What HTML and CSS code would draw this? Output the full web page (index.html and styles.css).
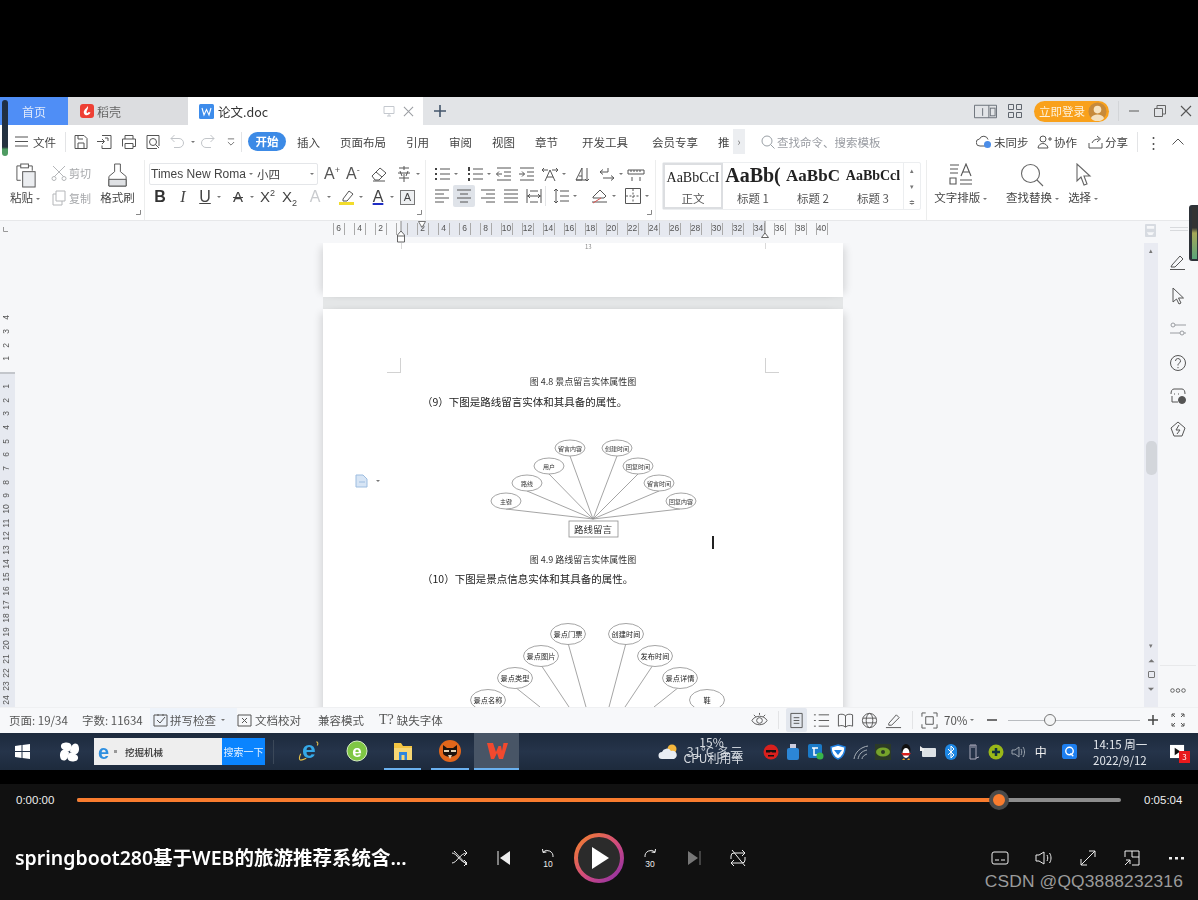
FILE: index.html
```html
<!DOCTYPE html>
<html lang="zh">
<head>
<meta charset="utf-8">
<title>论文.doc</title>
<link rel="stylesheet" href="styles.css">
</head>
<body>
<div class="topgap"></div>
<main class="screen">
  <div class="tabs">
    <div class="tab home">首页</div>
    <div class="tab shell">
      <svg class="tab-ic" viewBox="0 0 14 14"><rect width="14" height="14" rx="3" fill="#ee4035"/><path d="M8 2C6 5 3 6 4 9.500C5 12 9 12 10.500 8.500L8.500 8C8 9.500 6.500 9.500 6.500 8C6.500 6.500 8.500 5 8 2Z" fill="#fff"/></svg>
      <span>稻壳</span>
    </div>
    <div class="tab doc">
      <svg class="tab-ic-w" viewBox="0 0 15 15"><rect width="15" height="15" rx="1.500" fill="#3d8ceb"/><path d="M3 4l2 7 2.500-5.500L10 11l2-7" fill="none" stroke="#fff" stroke-width="1.100"/></svg>
      <span class="doc-name">论文.doc</span>
      <svg class="doc-mon" viewBox="0 0 12 12"><path d="M1 1.500h10v7H1zM6 8.500v2.500M4 11h4" fill="none" stroke="#c4c8ce"/></svg>
      <svg class="doc-x" viewBox="0 0 12 12"><path d="M1 1l10 10M11 1L1 11" stroke="#9a9da2" stroke-width="1.100"/></svg>
    </div>
    <svg class="tab-plus" viewBox="0 0 12 12"><path d="M6 0v12M0 6h12" stroke="#44566c" stroke-width="1.600"/></svg>
    <div class="tab-right">
      <svg class="tr-tablet" viewBox="0 0 24 15"><path d="M.5 1h23v13H.5zM15.500 1v13" fill="none" stroke="#6a7078"/><path d="M9 4v8" stroke="#6a7078"/><rect x="17" y="4" width="5" height="8" fill="none" stroke="#6a7078"/></svg>
      <svg class="tr-grid" viewBox="0 0 14 14"><path d="M.5.500h5v5h-5zM8.500.500h5v5h-5zM.5 8.500h5v5h-5zM8.500 8.500h5v5h-5z" fill="none" stroke="#5f656d"/></svg>
      <div class="login"><span>立即登录</span><svg class="avatar" viewBox="0 0 20 20"><circle cx="10" cy="10" r="9.500" fill="#c78a3a"/><circle cx="10" cy="8" r="4" fill="#f7e3bf"/><path d="M3 17c2-5 12-5 14 0a9 9 0 0 1-14 0z" fill="#f4e0bd"/></svg></div>
      <i class="vsep tab-sep"></i>
      <svg class="win-ic" viewBox="0 0 12 12"><path d="M1 6h10" stroke="#666" stroke-width="1.100"/></svg>
      <svg class="win-ic" viewBox="0 0 12 12"><path d="M.5 3.500h8v8h-8zM3 3.500V.5h8.500V9H8.500" fill="none" stroke="#666"/></svg>
      <svg class="win-ic" viewBox="0 0 12 12"><path d="M1 1l10 10M11 1L1 11" stroke="#555" stroke-width="1.100"/></svg>
    </div>
  </div>

  <div class="menu">
    <svg class="m-burger" viewBox="0 0 13 11"><path d="M0 1h13M0 5.500h13M0 10h13" stroke="#555" stroke-width="1.200"/></svg>
    <span class="m-file">文件</span>
    <i class="vsep m-sep1"></i>
    <div class="m-tools">
      <svg class="i" viewBox="0 0 18 18"><path d="M3 2.500h9l3 3v10H3zM6 15.500V10h6v5.500M6 2.500V6h5" /></svg>
      <svg class="i" viewBox="0 0 18 18"><path d="M6 2.500h9v13H6v-3M1 8.500h7M6 6l2.500 2.500L6 11M9 5h3v3" /></svg>
      <svg class="i" viewBox="0 0 18 18"><path d="M5 6V2.500h8V6M2.500 13.500V6h13v7.500H13M5 10.500h8v5H5z" /></svg>
      <svg class="i" viewBox="0 0 18 18"><path d="M13 15.500H3v-13h12V13" /><circle cx="9" cy="9" r="3.500"/><path d="M11.500 11.500l3.500 3.500"/></svg>
      <svg class="i dim" viewBox="0 0 18 18"><path d="M3 5.500h8a4.500 4.500 0 0 1 0 9H6M3 5.500L6.500 2M3 5.500L6.500 9"/></svg>
      <i class="caret c-undo"></i>
      <svg class="i dim" viewBox="0 0 18 18"><path d="M15 5.500H7a4.500 4.500 0 0 0 0 9h5M15 5.500L11.500 2M15 5.500L11.500 9"/></svg>
      <svg class="i chev" viewBox="0 0 18 18"><path d="M5 5h8M5 9l4 4 4-4"/></svg>
    </div>
    <i class="vsep m-sep2"></i>
    <span class="pill">开始</span>
    <nav class="m-nav">
      <span>插入</span><span>页面布局</span><span>引用</span><span>审阅</span><span>视图</span><span>章节</span><span class="wide">开发工具</span><span class="wide">会员专享</span><span>推</span>
    </nav>
    <span class="more">›</span>
    <div class="search">
      <svg class="s-ic" viewBox="0 0 14 14"><circle cx="6" cy="6" r="5" fill="none" stroke="#9aa0a6"/><path d="M9.500 9.500L13.500 13.500" stroke="#9aa0a6"/></svg>
      <span>查找命令、搜索模板</span>
    </div>
    <div class="m-right">
      <svg class="mr-ic" viewBox="0 0 16 14"><path d="M12 11H4a3.500 3.500 0 0 1-.5-7A4.500 4.500 0 0 1 12 4.500" fill="none" stroke="#555"/><circle cx="11.500" cy="9.500" r="3.500" fill="#4b8de8"/></svg><span class="mr-t1">未同步</span>
      <svg class="mr-ic mr-g1" viewBox="0 0 16 14"><circle cx="6" cy="4" r="3" fill="none" stroke="#555"/><path d="M1 13c.5-6 9-6 10 0zM11 4h4M13 2v4" fill="none" stroke="#555"/></svg><span class="mr-t2">协作</span>
      <svg class="mr-ic mr-g2" viewBox="0 0 16 14"><path d="M1 8v5h13V8M4 8c1-3 4-4 7-4M9 1l3.500 3L9 7" fill="none" stroke="#555"/></svg><span class="mr-t3">分享</span>
      <i class="vsep mr-sep"></i>
      <span class="dots">⋮</span>
      <svg class="up" viewBox="0 0 12 7"><path d="M.5 6.500L6 1l5.500 5.500" fill="none" stroke="#555"/></svg>
    </div>
  </div>

  <div class="ribbon">
    <section class="rg clip">
      <div class="paste">
        <svg class="big" viewBox="0 0 24 26"><path d="M6 18H2V3h4M14 3h4v5" fill="none" stroke="#555"/><rect x="6" y="1" width="8" height="4" fill="none" stroke="#555"/><rect x="8" y="9" width="13" height="16" fill="#eceef1" stroke="#555"/></svg>
        <span class="lab">粘贴<i class="caret"></i></span>
      </div>
      <div class="cutcopy">
        <span class="off"><svg class="i-s" viewBox="0 0 16 16"><path d="M2 1l11 11M14 1L3 12"/><circle cx="3" cy="13.500" r="2"/><circle cx="13" cy="13.500" r="2"/></svg>剪切</span>
        <span class="off"><svg class="i-s" viewBox="0 0 16 16"><path d="M5 1h9v10H5zM5 4H2v11h9v-4"/></svg>复制</span>
      </div>
      <div class="brush">
        <svg class="big" viewBox="0 0 24 26"><path d="M9 1h6v8l6 5v10H3V14l6-5z" fill="none" stroke="#555"/><path d="M3 17h18v7H3z" fill="#dfe1e4" stroke="#555"/></svg>
        <span class="lab">格式刷</span>
      </div>
      <svg class="corner" viewBox="0 0 5 5"><path d="M4.500 0v4.500H0" fill="none" stroke="#888"/></svg>
    </section>
    <section class="rg font">
      <div class="f1">
        <div class="combo"><span class="cb-font">Times New Roma<i class="caret"></i></span><span class="cb-size">小四<i class="caret"></i></span></div>
        <div class="f1-tools">
          <span class="glyph-a">A<sup>+</sup></span>
          <span class="glyph-a">A<sup>-</sup></span>
          <svg class="i" viewBox="0 0 18 18"><path d="M2 11l8-8 6 5-7 7H5zM6 7l6 5M3 16h12"/></svg>
          <span class="cell"><svg class="i" viewBox="0 0 18 18"><path d="M4 3h10M9 1v4M3 8h12M5 6l2 5M13 6l-2 5M9 9v8M4 13h10"/></svg><i class="caret"></i></span>
        </div>
      </div>
      <div class="f2">
        <span class="g b">B</span>
        <span class="g it">I</span>
        <span class="cell"><span class="g u">U</span><i class="caret"></i></span>
        <span class="cell"><span class="g strike">A</span><i class="caret"></i></span>
        <span class="g sc">X<sup>2</sup></span>
        <span class="g sc">X<sub>2</sub></span>
        <span class="cell"><span class="g ghost">A</span><i class="caret"></i></span>
        <span class="cell"><svg class="i" viewBox="0 0 18 18"><path d="M5 11l6-8 4 3-6 7H5z"/><rect x="1" y="14" width="15" height="3" fill="#f2dc2b" stroke="none"/></svg><i class="caret"></i></span>
        <span class="cell"><span class="g cl">A</span><i class="caret"></i></span>
        <span class="g boxed">A</span>
      </div>
      <svg class="corner" viewBox="0 0 5 5"><path d="M4.500 0v4.500H0" fill="none" stroke="#888"/></svg>
    </section>
    <section class="rg para">
      <div class="p1">
        <span class="cell"><svg class="i" viewBox="0 0 18 18"><path d="M7 4h10M7 9h10M7 14h10"/><path class="dot" d="M2 3h2v2H2zM2 8h2v2H2zM2 13h2v2H2z"/></svg><i class="caret"></i></span>
        <span class="cell"><svg class="i" viewBox="0 0 18 18"><path d="M7 4h10M7 9h10M7 14h10"/><path class="dot" d="M2 2h2v4H2zM2 8h2v2H2zM2 13h2v3H2z"/></svg><i class="caret"></i></span>
        <svg class="i" viewBox="0 0 18 18"><path d="M2 3h14M9 7h7M9 11h7M2 15h14M7 9H1.500M4 6.500L1.500 9 4 11.500"/></svg>
        <svg class="i" viewBox="0 0 18 18"><path d="M2 3h14M9 7h7M9 11h7M2 15h14M1 9h5.500M4 6.500L6.500 9 4 11.500"/></svg>
        <span class="cell"><svg class="i" viewBox="0 0 18 18"><path d="M4 16l5-11 5 11M6 12h6M1 5h6M11 5h6M3 3L1 5l2 2M15 3l2 2-2 2"/></svg><i class="caret"></i></span>
        <svg class="i" viewBox="0 0 18 18"><path d="M3 15L9 3v12zM3 15h10M6 11h3M14 3v13M12 14l2 2 2-2"/></svg>
        <span class="cell"><svg class="i" viewBox="0 0 18 18"><path d="M10 3v4H2M5 4.500L2 7l3 2.500M5 13h11M13 10.500l3 2.500-3 2.500"/></svg><i class="caret"></i></span>
        <svg class="i" viewBox="0 0 18 18"><path d="M1 5v4h16V5zM4 5v2M7 5v2M10 5v2M13 5v2M5 12v4M13 12v4"/></svg>
      </div>
      <div class="p2">
        <svg class="i" viewBox="0 0 18 18"><path d="M2 3h14M2 7h9M2 11h14M2 15h9"/></svg>
        <span class="sel"><svg class="i" viewBox="0 0 18 18"><path d="M2 3h14M5 7h8M2 11h14M5 15h8"/></svg></span>
        <svg class="i" viewBox="0 0 18 18"><path d="M2 3h14M7 7h9M2 11h14M7 15h9"/></svg>
        <svg class="i" viewBox="0 0 18 18"><path d="M2 3h14M2 7h14M2 11h14M2 15h14"/></svg>
        <svg class="i" viewBox="0 0 18 18"><path d="M2 2v14M16 2v14M5 4h8M2 9h14M5 15h8M5 7l-2 2 2 2M13 7l2 2-2 2"/></svg>
        <span class="cell"><i class="vsep p-sep"></i><svg class="i" viewBox="0 0 18 18"><path d="M4 2v14M2 4l2-2 2 2M2 14l2 2 2-2M8 4h9M8 9h9M8 14h9"/></svg><i class="caret"></i></span>
        <span class="cell"><svg class="i" viewBox="0 0 18 18"><path d="M2 10l7-7 6 6-2 2H2zM1 15h15" /><path d="M2 16l8-5" stroke="#d9534f"/></svg><i class="caret"></i></span>
        <span class="cell"><svg class="i" viewBox="0 0 18 18"><path d="M1.500 1.500h15v15h-15z"/><path stroke-dasharray="2 1.500" d="M9 2v14M2 9h14"/></svg><i class="caret"></i></span>
      </div>
      <svg class="corner" viewBox="0 0 5 5"><path d="M4.500 0v4.500H0" fill="none" stroke="#888"/></svg>
    </section>
    <section class="gallery">
      <div class="st active"><span class="sample s0">AaBbCcI</span><span class="st-l">正文</span></div>
      <div class="st"><span class="sample s1">AaBb(</span><span class="st-l">标题 1</span></div>
      <div class="st"><span class="sample s2">AaBbC</span><span class="st-l">标题 2</span></div>
      <div class="st"><span class="sample s3">AaBbCcl</span><span class="st-l">标题 3</span></div>
      <div class="st-scroll"><span>▴</span><span>▾</span><span>≑</span></div>
    </section>
    <section class="rg big-tools">
      <div class="bt bt-text">
        <svg class="big2" viewBox="0 0 24 24"><path d="M1 2h9M1 6h8M1 10h8M1 15h6v6H1zM11 17h12M11 21h12M12 13L17 1l5 12M14 9h6" fill="none" stroke="#555" stroke-width="1.100"/></svg>
        <span class="lab">文字排版<i class="caret"></i></span>
      </div>
      <div class="bt bt-find">
        <svg class="big2" viewBox="0 0 24 24"><circle cx="10.500" cy="10.500" r="9" fill="none" stroke="#666" stroke-width="1.100"/><path d="M17 17l6 6" stroke="#666" stroke-width="1.100"/></svg>
        <span class="lab">查找替换<i class="caret"></i></span>
      </div>
      <div class="bt bt-sel">
        <svg class="big2" viewBox="0 0 24 24"><path d="M6 1l0 17 4-4 3 8 3-1-3-8 6 0z" fill="#fff" stroke="#666" stroke-width="1.100"/></svg>
        <span class="lab">选择<i class="caret"></i></span>
      </div>
    </section>
  </div>

  <div class="ruler">
    <svg class="r-corner" viewBox="0 0 5 5"><path d="M.5 0v4.500H5" fill="none" stroke="#999"/></svg>
    <div class="r-track">
      <span><b>6</b></span><span><b>4</b></span><span><b>2</b></span><span><b></b></span><span><b>2</b></span><span><b>4</b></span><span><b>6</b></span><span><b>8</b></span><span><b>10</b></span><span><b>12</b></span><span><b>14</b></span><span><b>16</b></span><span><b>18</b></span><span><b>20</b></span><span><b>22</b></span><span><b>24</b></span><span><b>26</b></span><span><b>28</b></span><span><b>30</b></span><span><b>32</b></span><span><b>34</b></span><span><b>36</b></span><span><b>38</b></span><span><b>40</b></span>
    </div>
    <svg class="mark-tri" viewBox="0 0 8 7"><path d="M.5.500h7L4 6.500z" fill="#fff" stroke="#555" stroke-width=".8"/></svg>
    <svg class="mark-home" viewBox="0 0 8 22"><path d="M4 0v10" stroke="#888"/><path d="M4 10l3.500 4v7H.5v-7zM.5 15h7" fill="#fff" stroke="#555" stroke-width=".9"/></svg>
    <svg class="mark-r" viewBox="0 0 8 22"><path d="M4 0v12" stroke="#888"/><path d="M4 12l3.500 4.500h-7z" fill="#fff" stroke="#555" stroke-width=".9"/></svg>
    <svg class="r-save" viewBox="0 0 12 14"><rect width="12" height="14" rx="1" fill="#d7dbe1"/><path d="M2 2h8v3H2zM2 9l2 3h4l2-3" fill="#f6f7f9"/></svg>
    <i class="r-lines"></i>
  </div>

  <div class="work">
    <div class="vruler">
      <div class="vr-top"><span>4</span><span>3</span><span>2</span><span>1</span></div>
      <div class="vr-body"><span>1</span><span>2</span><span>3</span><span>4</span><span>5</span><span>6</span><span>7</span><span>8</span><span>9</span><span>10</span><span>11</span><span>12</span><span>13</span><span>14</span><span>15</span><span>16</span><span>17</span><span>18</span><span>19</span><span>20</span><span>21</span><span>22</span><span>23</span><span>24</span></div>
    </div>
    <div class="canvas">
      <div class="page p-prev">
        <i class="tick t-l"></i><i class="tick t-r"></i>
        <span class="pageno">13</span>
      </div>
      <div class="page-gap"></div>
      <article class="page p-cur">
        <i class="crop c-tl"></i><i class="crop c-tr"></i>
        <p class="cap cap1">图 4.8 景点留言实体属性图</p>
        <p class="para-t">（9）下图是路线留言实体和其具备的属性。</p>
        <svg class="er er1" viewBox="0 0 520 116" role="img">
          <g class="ln">
            <path d="M247 26L270 89M294 26L270 89M315 44L270 89M336 61L270 89M357 79L270 89M226 44L270 89M204 61L270 89M183 79L270 89"/>
          </g>
          <g class="el"><ellipse cx="247" cy="18" rx="15" ry="8"/><ellipse cx="294" cy="18" rx="15" ry="8"/><ellipse cx="315" cy="36" rx="15" ry="8"/><ellipse cx="336" cy="53" rx="15" ry="8"/><ellipse cx="358" cy="71" rx="15" ry="8"/><ellipse cx="226" cy="36" rx="15" ry="8"/><ellipse cx="204" cy="53" rx="15" ry="8"/><ellipse cx="183" cy="71" rx="15" ry="8"/></g>
          <rect class="box" x="246" y="91" width="49" height="16"/>
          <g class="tx">
            <text x="247" y="20.500">留言内容</text><text x="294" y="20.500">创建时间</text><text x="315" y="38.500">回复时间</text><text x="336" y="55.500">留言时间</text><text x="358" y="73.500">回复内容</text><text x="226" y="38.500">用户</text><text x="204" y="55.500">路线</text><text x="183" y="73.500">主键</text>
            <text class="tx-b" x="270" y="103">路线留言</text>
          </g>
        </svg>
        <p class="cap cap2">图 4.9 路线留言实体属性图</p>
        <p class="para-t para-t2">（10）下图是景点信息实体和其具备的属性。</p>
        <svg class="er er2" viewBox="0 0 520 90" role="img">
          <g class="ln"><path d="M245 22L263 86M303 22L286 86M218 44L246 86M330 44L302 86M192 66L217 86M356 66L331 86M170 88L174 90"/></g>
          <g class="el"><ellipse cx="245" cy="13" rx="17.500" ry="10.500"/><ellipse cx="303" cy="13" rx="17.500" ry="10.500"/><ellipse cx="218" cy="35" rx="17.500" ry="10.500"/><ellipse cx="332" cy="35" rx="17.500" ry="10.500"/><ellipse cx="192" cy="57" rx="17.500" ry="10.500"/><ellipse cx="357" cy="57" rx="17.500" ry="10.500"/><ellipse cx="165" cy="79" rx="17.500" ry="10.500"/><ellipse cx="384" cy="79" rx="17.500" ry="10.500"/></g>
          <g class="tx2"><text x="245" y="16">景点门票</text><text x="303" y="16">创建时间</text><text x="218" y="38">景点图片</text><text x="332" y="38">发布时间</text><text x="192" y="60">景点类型</text><text x="357" y="60">景点详情</text><text x="165" y="82">景点名称</text><text x="384" y="82">鞋</text></g>
        </svg>
        <i class="caret-bar"></i>
        <div class="float-ic"><svg viewBox="0 0 13 14"><path d="M1 1h7l4 4v8H1z" fill="#d7e5f5" stroke="#9dbde0"/><path d="M4 8h6" stroke="#9dbde0"/></svg><i class="caret"></i></div>
      </article>
    </div>
    <div class="vscroll">
      <span class="vs-up">▴</span>
      <i class="vs-thumb"></i>
      <span class="vs-dn">▾</span>
      <span class="vs-b">⏶</span>
      <i class="vs-sq"></i>
      <span class="vs-b">⏷</span>
    </div>
    <aside class="side">
      <svg class="sd" viewBox="0 0 18 18"><path d="M3 12l8-9 3 3-8 8H2zM1 16.500h15"/></svg>
      <svg class="sd" viewBox="0 0 18 18"><path d="M4 1v14l3.500-3 2.500 5 2-1-2.500-5h5z"/></svg>
      <svg class="sd light" viewBox="0 0 18 18"><circle cx="4" cy="5" r="2"/><path d="M6 5h11M1 13h10M15 13h2"/><circle cx="13" cy="13" r="2"/></svg>
      <svg class="sd" viewBox="0 0 18 18"><circle cx="9" cy="9" r="7.500"/><path d="M6.500 7a2.500 2.500 0 1 1 3.500 2.300C9 10 9 10.500 9 11.500M9 13v1.200"/></svg>
      <svg class="sd" viewBox="0 0 18 18"><path d="M2 7c0-3 1-5 3-5h8c2 0 3 2 3 5M3 9v6h6"/><path d="M5 7h1M9 7h1"/><circle cx="13" cy="13" r="3.500" fill="#555"/></svg>
      <svg class="sd" viewBox="0 0 18 18"><path d="M9 1l7 6-3 8H5L2 7z"/><path d="M10 4L7 9h4l-3 4"/></svg>
      <i class="sd-rule"></i>
      <svg class="sd-more" viewBox="0 0 16 5"><circle cx="2.500" cy="2.500" r="1.800"/><circle cx="8" cy="2.500" r="1.800"/><circle cx="13.500" cy="2.500" r="1.800"/></svg>
    </aside>
  </div>

  <footer class="status">
    <span class="s-t s-page">页面: 19/34</span>
    <span class="s-t s-count">字数: 11634</span>
    <span class="s-t s-spell"><svg class="i-s2" viewBox="0 0 15 15"><path d="M1 2h13v11H1zM5 1v2M10 1v2M4 7l3 3 5-6"/></svg>拼写检查<i class="caret"></i></span>
    <span class="s-t s-check"><svg class="i-s2" viewBox="0 0 15 15"><path d="M1 2h13v11H1zM5 5l5 5M10 5l-5 5"/></svg>文档校对</span>
    <span class="s-t s-compat">兼容模式</span>
    <span class="s-t s-miss"><span class="tq">T?</span>缺失字体</span>
    <div class="s-right">
      <svg class="i-s3" viewBox="0 0 18 18"><path d="M1 9c3-6 13-6 16 0-3 6-13 6-16 0z"/><circle cx="9" cy="9" r="3"/><path d="M3 3l2 2M15 3l-2 2M9 1v2"/></svg>
      <i class="vsep s-sep"></i>
      <span class="s-sel"><svg class="i-s3" viewBox="0 0 18 18"><path d="M3 1.500h12v15H3zM6 6h6M6 9h6M6 12h6"/></svg></span>
      <svg class="i-s3" viewBox="0 0 18 18"><path d="M6 3h11M6 9h11M6 15h11M1 3h2M1 9h2M1 15h2"/></svg>
      <svg class="i-s3" viewBox="0 0 18 18"><path d="M9 4C7 2 4 2 1.500 3v12C4 14 7 14 9 16c2-2 5-2 7.500-1V3C14 2 11 2 9 4zM9 4v12"/></svg>
      <svg class="i-s3" viewBox="0 0 18 18"><circle cx="9" cy="9" r="7.500"/><ellipse cx="9" cy="9" rx="3.500" ry="7.500"/><path d="M2 6.500h14M2 11.500h14"/></svg>
      <svg class="i-s3" viewBox="0 0 18 18"><path d="M4 12l8-9 3 3-8 8H4zM1 16.500h16"/></svg>
      <i class="vsep s-sep s-sep2"></i>
      <svg class="i-s3 s-frame" viewBox="0 0 18 18"><path d="M1 5V1h4M13 1h4v4M17 13v4h-4M5 17H1v-4M5 5h8v8H5z"/></svg>
      <span class="s-t s-zoom">70%<i class="caret"></i></span>
      <svg class="s-minus" viewBox="0 0 10 10"><path d="M0 5h10" stroke="#444" stroke-width="1.500"/></svg>
      <div class="slider"><i></i></div>
      <svg class="s-plus" viewBox="0 0 10 10"><path d="M0 5h10M5 0v10" stroke="#444" stroke-width="1.500"/></svg>
      <svg class="s-full" viewBox="0 0 14 14"><path d="M1 4V1h3M10 1h3v3M13 10v3h-3M4 13H1v-3M1 1l3 3M13 1l-3 3M13 13l-3-3M1 13l3-3" fill="none" stroke="#555"/></svg>
    </div>
  </footer>

  <div class="taskbar">
    <svg class="t-win" viewBox="0 0 15 15"><path d="M0 2l6.500-1v6H0zM7.500 1L15 0v7H7.500zM0 8h6.500v6L0 13zM7.500 8H15v7l-7.500-1z" fill="#fff"/></svg>
    <svg class="t-pin" viewBox="0 0 22 22"><g fill="#fff"><path d="M10.500 10.500C6 10 2 8 2 5 2 2 5 1 8 1c4 0 6 3 5 6-.5 1.500-1.500 2.500-2.500 3.500z"/><path d="M11.500 10.500C12 6 14 2 17 2c3 0 4 3 4 6 0 4-3 6-6 5-1.500-.5-2.500-1.500-3.500-2.500z"/><path d="M11.500 11.500C16 12 20 14 20 17c0 3-3 4-6 4-4 0-6-3-5-6 .5-1.500 1.500-2.500 2.500-3.500z"/><path d="M10.500 11.500C10 16 8 20 5 20c-3 0-4-3-4-6 0-4 3-6 6-5 1.500.5 2.500 1.500 3.500 2.500z"/></g></svg>
    <div class="t-search">
      <div class="ts-in">
        <span class="ts-e">e</span><i class="ts-c"></i><span class="ts-q">挖掘机械</span>
      </div>
      <span class="ts-btn">搜索一下</span>
    </div>
    <i class="t-sep"></i>
    <div class="t-apps">
      <div class="app a-ie"><svg viewBox="0 0 24 24"><text class="e-blue" x="12" y="20">e</text><path d="M20 2c2 0 2 2 1 4M3 15C1 19 1 22 3 22c2 0 4-1 6-2" fill="none" stroke="#e5c04a" stroke-width="1.200"/></svg></div>
      <div class="app a-green"><svg viewBox="0 0 22 22"><circle cx="11" cy="11" r="10" fill="#7fc744" stroke="#d6eec0"/><text class="e-white" x="11" y="16.500">e</text></svg></div>
      <div class="app a-folder on"><svg viewBox="0 0 22 22"><path d="M2 3h7l2 3h9v14H2z" fill="#f4c542"/><path d="M2 8h18v12H2z" fill="#f7d774"/><path d="M7 12h8v8H7z" fill="#2e86de"/><path d="M9.500 15h3v5h-3z" fill="#f7d774"/></svg></div>
      <div class="app a-fox on"><svg viewBox="0 0 22 22"><circle cx="11" cy="11" r="11" fill="#e2661a"/><path d="M4 5l4 3h6l4-3v8c-1 5-13 5-14 0z" fill="#1e140e"/><path d="M5 10h5v2H5zM12 10h5v2h-5z" fill="#e8d6b8"/><path d="M9 15h4l-2 4z" fill="#e8d6b8"/></svg></div>
      <div class="app a-wps on"><svg viewBox="0 0 22 22"><path d="M1 3h6l3 9 2.500-6h2.500l1 5 1.500-8H22l-5 16h-4l-2-6-3 6H5z" fill="#f1492e"/></svg></div>
    </div>
    <div class="t-tray">
      <div class="weather">
        <svg class="wx" viewBox="0 0 20 16"><circle cx="14" cy="5" r="4.500" fill="#f6b73c"/><path d="M4 15a3.500 3.500 0 0 1 0-7 5 5 0 0 1 9-1 4 4 0 0 1 3 8z" fill="#e9edf3"/></svg>
        <span>31°C 多云</span>
        <span class="cpu"><b>15%</b><b>CPU利用率</b></span>
      </div>
      <div class="tray-ics">
        <svg viewBox="0 0 16 16"><circle cx="8" cy="8" r="7.500" fill="#d8201d"/><path d="M3 6h10v2.500H9L8 7.500 7 8.500H3zM5 11h6v1.500H5z" fill="#111"/></svg>
        <svg viewBox="0 0 16 16"><rect x="5" y="0" width="6" height="5" fill="#ccd"/><rect x="2" y="4" width="12" height="12" rx="2" fill="#2c86d6"/></svg>
        <svg viewBox="0 0 16 16"><rect width="14" height="14" rx="2" fill="#1a7ac8"/><path d="M4 4h6M6 4v7h3" stroke="#fff" stroke-width="1.500" fill="none"/><circle cx="12" cy="12" r="3.500" fill="#38b54a"/></svg>
        <svg viewBox="0 0 16 16"><path d="M8 1l7 2c0 6-2 10-7 12C3 13 1 9 1 3z" fill="#fff" stroke="#1f7fe0" stroke-width="1.500"/><path d="M4 6h8l-4 5z" fill="#1f7fe0"/></svg>
        <svg viewBox="0 0 16 16"><path d="M1 15C2 8 8 3 15 2M5 15c1-5 4-8 9-9M9 15c0-2 2-4 5-5" fill="none" stroke="#a8b0b8"/></svg>
        <svg viewBox="0 0 16 16"><rect width="16" height="16" fill="#2b3a26"/><ellipse cx="8" cy="8" rx="7" ry="4.500" fill="#76a32b"/><circle cx="8" cy="8" r="2" fill="#2b3a26"/></svg>
        <svg viewBox="0 0 16 16"><ellipse cx="8" cy="6" rx="4.500" ry="6" fill="#111"/><ellipse cx="8" cy="9" rx="3.500" ry="5" fill="#fff"/><path d="M3 9h10l-2 2.500H5z" fill="#d8201d"/><path d="M4 16h3l-1-2zM9 16h3l-1-2z" fill="#f0a020"/></svg>
        <svg viewBox="0 0 16 16"><rect x="2" y="4" width="14" height="9" rx="1" fill="#dde2e6"/><path d="M0 2l4 3v2H0z" fill="#eee"/></svg>
        <svg viewBox="0 0 16 16"><rect x="2" y="0" width="12" height="16" rx="6" fill="#1e88e5"/><path d="M5 5l6 6-3 3V2l3 3-6 6" fill="none" stroke="#fff"/></svg>
        <svg viewBox="0 0 16 16"><path d="M5 1h6v14H5z" fill="none" stroke="#aab"/><path d="M7 1v3M9 1v3M11 14l3-1" stroke="#aab"/></svg>
        <svg viewBox="0 0 16 16"><circle cx="8" cy="8" r="7.500" fill="#9ab818"/><path d="M8 4v8M4 8h8" stroke="#13323f" stroke-width="2.500"/></svg>
        <svg viewBox="0 0 16 16"><path d="M2 6h3l4-3v10l-4-3H2zM11 5c1 2 1 4 0 6M13 3c2 3 2 7 0 10" fill="none" stroke="#9aa3ad"/></svg>
        <span class="zh">中</span>
      </div>
      <svg class="t-q" viewBox="0 0 16 16"><rect width="16" height="16" rx="3" fill="#1d7ff0"/><circle cx="8" cy="7.500" r="4" fill="none" stroke="#fff" stroke-width="1.500"/><path d="M9 10l3 3" stroke="#fff" stroke-width="1.500"/></svg>
      <div class="clock"><span>14:15 周一</span><span>2022/9/12</span></div>
      <div class="notify"><svg viewBox="0 0 16 16"><rect y="1" width="15" height="14" fill="#fff"/><path d="M5 4l6 4-6 4z" fill="#111"/></svg><span class="badge">3</span></div>
    </div>
  </div>
</main>

<section class="player">
  <div class="bar">
    <span class="time">0:00:00</span>
    <div class="track"><div class="fill" style="width:88.3%"><i class="thumb"></i></div></div>
    <span class="time time-end">0:05:04</span>
  </div>
  <div class="ctrl">
    <h1 class="title">springboot280基于WEB的旅游推荐系统含...</h1>
    <button class="pb" aria-label="随机"><svg viewBox="0 0 20 20"><path d="M2 5c5 0 8 10 15 10M2 15c5 0 8-10 15-10M14 2l3 3-3 3M14 12l3 3-3 3M4 3l13 14"/></svg></button>
    <button class="pb" aria-label="上一个"><svg viewBox="0 0 20 20"><path class="fw" d="M16 3v14L6 10z"/><path d="M4 3v14"/></svg></button>
    <button class="pb" aria-label="后退10秒"><svg viewBox="0 0 20 20"><path d="M15 9a6 6 0 0 0-10-5M4.500 1l.5 3.500 3.500-.5"/><text x="10" y="19">10</text></svg></button>
    <button class="play" aria-label="播放"><svg viewBox="0 0 50 50"><defs><linearGradient id="ring" x1="0" y1="0" x2="1" y2="1"><stop offset="0" stop-color="#f5822a"/><stop offset=".55" stop-color="#d04a80"/><stop offset="1" stop-color="#8a2fa8"/></linearGradient></defs><circle cx="25" cy="25" r="23" fill="#2b2b2b" stroke="url(#ring)" stroke-width="4"/><path d="M18 14l17 11-17 11z" fill="#fff"/></svg></button>
    <button class="pb" aria-label="前进30秒"><svg viewBox="0 0 20 20"><path d="M5 9a6 6 0 0 1 10-5M15.500 1L15 4.500 11.500 4"/><text x="10" y="19">30</text></svg></button>
    <button class="pb" aria-label="下一个"><svg class="gray" viewBox="0 0 20 20"><path class="fw" d="M4 3v14l10-7z"/><path d="M16 3v14"/></svg></button>
    <button class="pb" aria-label="循环"><svg viewBox="0 0 20 20"><path d="M3 11V8a3 3 0 0 1 3-3h11M14 2l3 3-3 3M17 9v3a3 3 0 0 1-3 3H3M6 12l-3 3 3 3M4 2l13 16"/></svg></button>
    <div class="ctrl-right">
      <button class="pb" aria-label="字幕"><svg viewBox="0 0 20 20"><rect x="2" y="4" width="16" height="12" rx="2"/><path d="M5 12h4M11 12h4"/></svg></button>
      <button class="pb" aria-label="音量"><svg viewBox="0 0 20 20"><path d="M2 7h3l5-3v12l-5-3H2zM13 7c1 2 1 4 0 6M15.500 5c2 3 2 7 0 10"/></svg></button>
      <button class="pb" aria-label="全屏"><svg viewBox="0 0 20 20"><path d="M3 17L17 3M11 3h6v6M3 11v6h6"/></svg></button>
      <button class="pb" aria-label="画中画"><svg viewBox="0 0 20 20"><path d="M10 9V3h7v14h-7M3 9V3h7M10 9h7M3 17l5-5M4 12h4v4"/></svg></button>
      <button class="pb" aria-label="更多"><svg viewBox="0 0 20 20"><path class="fw" d="M3 9h3v2.500H3zM9 9h3v2.500H9zM15 9h3v2.500h-3z"/></svg></button>
    </div>
  </div>
  <span class="mark">CSDN @QQ3888232316</span>
</section>

<div class="levels lv-l"><i></i></div>
<div class="levels lv-r"><i></i></div>
</body>
</html>
```

FILE: styles.css
```css
* { box-sizing: border-box; }
html, body { margin: 0; height: 900px; overflow: hidden; }
body { background: #000; position: relative; width: 1198px; font-family: "Noto Sans CJK SC", "Liberation Sans", sans-serif; font-size: 11.5px; color: #444; }
i { display: block; font-style: normal; }
p, h1 { margin: 0; }
svg { display: block; flex: none; }
.topgap { height: 97px; }
.screen { height: 673px; display: flex; flex-direction: column; background: #fff; filter: blur(.4px); overflow: hidden; }

/* tabs */
.tabs { height: 28px; flex: none; display: flex; align-items: center; background: #e2e4e7; }
.tab { height: 28px; display: flex; align-items: center; font-size: 12px; }
.home { width: 68px; padding-left: 22px; background: #4f8ef6; color: #dfe9fb; }
.shell { width: 120px; padding-left: 12px; background: #dcdde0; color: #666; gap: 3px; }
.tab-ic { width: 14px; height: 14px; }
.doc { width: 235px; padding-left: 11px; background: #fff; color: #333; }
.tab-ic-w { width: 15px; height: 15px; margin-right: 4px; }
.doc-name { width: 165px; font-size: 12.5px; }
.doc-mon { width: 12px; height: 12px; margin-right: 8px; }
.doc-x { width: 11px; height: 11px; }
.tab-plus { width: 12px; height: 12px; margin-left: 11px; }
.tab-right { margin-left: auto; display: flex; align-items: center; padding-right: 6px; }
.tr-tablet { width: 23px; height: 15px; margin-right: 11px; }
.tr-grid { width: 14px; height: 14px; margin-right: 12px; }
.login { width: 75px; height: 21px; border-radius: 11px; background: #f9a11b; color: #fdf2dc; display: flex; align-items: center; padding-left: 5px; font-size: 11.5px; }
.avatar { width: 19px; height: 19px; margin-left: 3px; }
.vsep { width: 1px; background: #e3e4e6; flex: none; }
.tab-sep { height: 20px; margin: 0 9px; background: #d3d5d8; }
.win-ic { width: 12px; height: 12px; margin-right: 14px; }
.win-ic:last-child { margin-right: 0; }

/* menu */
.menu { height: 35px; flex: none; display: flex; align-items: center; padding: 0 0 2px 15px; background: #fff; color: #444; }
.m-burger { width: 13px; height: 11px; margin-right: 5px; }
.m-file { width: 32px; }
.m-sep1 { height: 20px; }
.m-tools { display: flex; align-items: center; margin-left: 6px; width: 169px; }
.i { width: 18px; height: 18px; fill: none; stroke: #555; stroke-width: 1; }
.m-tools .i { margin-right: 6px; }
.m-tools .dim { stroke: #c2c5c9; margin-right: 2px; }
.m-tools .c-undo { margin-right: 4px; }
.m-tools .chev { width: 14px; height: 14px; margin-left: 5px; margin-right: 0; }
.m-sep2 { height: 20px; }
.pill { margin-left: 6px; width: 38px; height: 19px; border-radius: 10px; background: #3c8ae6; color: #fff; text-align: center; line-height: 19px; font-size: 11.5px; font-weight: 700; }
.m-nav { display: flex; gap: 20px; margin-left: 11px; width: 436px; white-space: nowrap; }
.m-nav .wide { margin-left: 4px; }
.more { width: 12px; height: 25px; background: #eceef1; color: #777; text-align: center; line-height: 24px; font-size: 11px; }
.search { display: flex; align-items: center; margin-left: 16px; color: #9a9da3; width: 215px; gap: 2px; }
.s-ic { width: 14px; height: 14px; }
.m-right { display: flex; align-items: center; color: #444; }
.mr-ic { width: 16px; height: 14px; }
.mr-t1 { margin-left: 2px; width: 35px; }
.mr-g1 { margin-left: 8px; }
.mr-t2 { margin-left: 1px; width: 24px; }
.mr-g2 { margin-left: 10px; }
.mr-t3 { margin-left: 1px; width: 24px; }
.mr-sep { height: 20px; margin-left: 8px; }
.dots { margin-left: 8px; font-size: 15px; width: 14px; color: #555; }
.up { width: 12px; height: 7px; margin-left: 12px; }

/* ribbon */
.ribbon { height: 61px; flex: none; display: flex; background: #fff; border-bottom: 1px solid #e7e8ea; }
.rg { position: relative; border-right: 1px solid #eceded; }
.corner { position: absolute; right: 3px; bottom: 5px; width: 5px; height: 5px; }
.clip { width: 145px; display: flex; }
.caret { display: inline-block; width: 0; height: 0; border: 2.500px solid transparent; border-top-color: #777; border-bottom: 0; flex: none; margin-left: 3px; vertical-align: middle; }
.lab { font-size: 11.5px; color: #444; white-space: nowrap; }
.paste { width: 51px; padding: 3px 0 0 10px; display: flex; flex-direction: column; gap: 1px; }
.paste .big { margin-left: 5px; }
.big { width: 23px; height: 25px; }
.cutcopy { width: 42px; display: flex; flex-direction: column; gap: 6px; padding-top: 3px; }
.off { display: flex; align-items: center; color: #a6a8ab; font-size: 11px; gap: 2px; height: 19px; white-space: nowrap; }
.i-s { width: 16px; height: 16px; fill: none; stroke: #b4b6b9; }
.brush { padding: 3px 0 0 5px; display: flex; flex-direction: column; align-items: center; gap: 1px; width: 44px; }
.font { width: 281px; padding: 2px 0 0 4px; }
.f1 { display: flex; height: 23px; align-items: center; }
.combo { width: 169px; height: 22px; display: flex; border: 1px solid #e4e6e9; border-radius: 2px; align-items: center; }
.cb-font { width: 107px; padding-left: 1px; font-family: "Liberation Sans", sans-serif; font-size: 12px; display: flex; align-items: center; justify-content: space-between; padding-right: 4px; white-space: nowrap; overflow: hidden; }
.cb-size { flex: 1; display: flex; align-items: center; justify-content: space-between; padding-right: 3px; font-size: 11.5px; }
.f1-tools { display: grid; grid-template-columns: 22px 24px 25px 30px; margin-left: 6px; align-items: center; }
.glyph-a { font-family: "Liberation Sans", sans-serif; font-size: 16px; color: #555; line-height: 18px; white-space: nowrap; }
.glyph-a sup { font-size: 9px; line-height: 0; vertical-align: 6px; }
.cell { display: inline-flex; align-items: center; }
.f2 { display: grid; grid-template-columns: 23px 22px 33px 31px 22px 24px 32px 31px 31px 18px; margin: 1px 0 0 2px; height: 22px; align-items: center; }
.g { display: inline-block; width: 18px; text-align: center; font-family: "Liberation Sans", sans-serif; font-size: 16px; color: #444; line-height: 18px; white-space: nowrap; }
.g.b { font-weight: 700; color: #333; }
.g.it { font-style: italic; font-family: "Liberation Serif", serif; }
.g.u { text-decoration: underline; }
.g.strike { text-decoration: line-through; font-size: 15px; }
.g.sc { font-size: 15px; text-align: left; }
.g.sc sup, .g.sc sub { font-size: 9px; line-height: 0; }
.g.ghost { color: #c9cbce; }
.g.cl { text-decoration: underline; text-decoration-color: #1f2dc4; text-decoration-thickness: 2px; }
.g.boxed { width: 15px; height: 15px; border: 1px solid #777; font-size: 11px; line-height: 13px; background: #eef0f2; }
.para { width: 230px; padding: 3px 0 0 7px; }
.p1 { display: grid; grid-template-columns: 33px 29px 23px 23px 32px 25px 29px 18px; height: 21px; align-items: center; }
.p2 { display: grid; grid-template-columns: 22px 24px 23px 23px 29px 37px 33px 18px; height: 22px; margin-top: 1px; align-items: center; }
.sel { width: 22px; height: 22px; background: #dfe3e9; border-radius: 2px; margin-left: -2px; display: flex; align-items: center; justify-content: center; }
.p-sep { height: 20px; margin: 0 6px 0 -9px; }
.dot { fill: #444; stroke: none; }
.gallery { width: 259px; height: 48px; margin: 2px 0 0 6px; display: flex; border: 1px solid #eceef0; border-radius: 2px; }
.st { width: 60px; height: 46px; display: flex; flex-direction: column; align-items: center; overflow: hidden; font-family: "Liberation Serif", serif; color: #222; white-space: nowrap; }
.st.active { border: 2px solid #dcdee1; width: 60px; }
.sample { height: 26px; line-height: 25px; width: 58px; overflow: hidden; text-align: center; }
.s0 { font-size: 14px; }
.s1 { font-size: 20px; font-weight: 700; letter-spacing: 0; }
.s2 { font-size: 17px; font-weight: 700; }
.s3 { font-size: 14px; font-weight: 700; }
.st-l { font-family: "Noto Sans CJK SC", sans-serif; font-size: 11.5px; color: #555; line-height: 18px; }
.st-scroll { width: 17px; margin-left: auto; border-left: 1px solid #eceef0; display: flex; flex-direction: column; align-items: center; font-size: 7px; color: #777; justify-content: space-between; padding: 2px 0; }
.big-tools { display: flex; width: 180px; margin-left: 5px; border: 0; border-left: 1px solid #eceded; }
.bt { display: flex; flex-direction: column; align-items: center; padding-top: 3px; gap: 2px; }
.big2 { width: 24px; height: 24px; }
.bt-text { width: 68px; }
.bt-find { width: 66px; padding-left: 10px; }
.bt-sel { width: 46px; }

/* ruler */
.ruler { height: 22px; flex: none; position: relative; background: #f6f7f9; display: flex; }
.r-corner { position: absolute; left: 3px; top: 6px; width: 5px; height: 5px; }
.r-track { display: flex; margin-left: 328px; height: 16px; background: linear-gradient(90deg, transparent 73px, #e6e9f0 73px, #e6e9f0 437px, transparent 437px); }
.r-track span { width: 21px; display: flex; justify-content: center; padding-top: 2px; }
.r-track b { width: 12px; height: 12px; border-left: 1px solid #aaa; border-right: 1px solid #aaa; font: 400 8.500px/10px "Liberation Sans", sans-serif; color: #555; text-align: center; white-space: nowrap; display: flex; justify-content: center; }
.mark-tri { position: absolute; left: 418px; top: 0; width: 8px; height: 7px; }
.mark-home { position: absolute; left: 397px; top: 0; width: 8px; height: 22px; }
.mark-r { position: absolute; left: 761px; top: 0; width: 8px; height: 22px; }
.r-save { position: absolute; left: 1145px; top: 3px; width: 11px; height: 13px; }
.r-lines { position: absolute; left: 1170px; top: 6px; width: 18px; height: 4px; border-top: 1px solid #d8dadd; border-bottom: 1px solid #d8dadd; }

/* work */
.work { height: 464px; flex: none; display: flex; background: #f6f7f9; overflow: hidden; }
.vruler { width: 15px; flex: none; display: flex; flex-direction: column; }
.vr-top { height: 129px; flex: none; display: flex; flex-direction: column; justify-content: flex-end; padding-bottom: 7px; }
.vr-body { flex: 1; background: #e6e9f0; border-top: 2px solid #c3c6cb; padding-top: 5px; overflow: hidden; }
.vruler span { display: block; height: 13.660px; font: 8.500px/13.660px "Liberation Sans", sans-serif; color: #555; writing-mode: vertical-rl; transform: rotate(180deg); text-align: center; width: 15px; }
.canvas { width: 1129px; flex: none; padding-left: 308px; overflow: hidden; }
.page { width: 520px; background: #fff; position: relative; box-shadow: -6px 0 8px -4px rgba(0,0,0,.14), 6px 0 8px -4px rgba(0,0,0,.14); }
.p-prev { height: 54px; }
.page-gap { width: 520px; height: 12px; background: #e4e6e7; }
.tick { position: absolute; top: 0; width: 1px; height: 6px; background: #d9d9d9; }
.t-l { left: 78px; }
.t-r { left: 442px; }
.pageno { position: absolute; left: 262px; top: 0; font-size: 6px; line-height: 7px; color: #888; }
.p-cur { height: 500px; padding-top: 67px; }
.crop { position: absolute; top: 49px; width: 14px; height: 15px; border-bottom: 1px solid #d2d2d2; }
.c-tl { left: 64px; border-right: 1px solid #d2d2d2; }
.c-tr { left: 442px; border-left: 1px solid #d2d2d2; }
.cap { text-align: center; font-size: 9px; line-height: 12px; color: #333; word-spacing: 0; }
.para-t { padding-left: 99px; margin-top: 8px; font-size: 10.500px; line-height: 12px; color: #222; white-space: nowrap; }
.para-t2 { margin-top: 7px; }
.er { width: 520px; display: block; }
.er1 { height: 116px; margin-top: 22px; }
.er2 { height: 90px; margin-top: 36px; }
.cap2 { margin-top: 8px; }
.ln path { stroke: #8e8e8e; stroke-width: .8; fill: none; }
.el ellipse { fill: #fff; stroke: #8e8e8e; stroke-width: .8; }
.box { fill: #fff; stroke: #8e8e8e; stroke-width: .8; }
.tx text { font-size: 6px; text-anchor: middle; fill: #333; }
.tx .tx-b { font-size: 9.500px; }
.tx2 text { font-size: 7.200px; text-anchor: middle; fill: #222; }
.caret-bar { position: absolute; left: 389px; top: 227px; width: 2px; height: 13px; background: #222; }
.float-ic { position: absolute; left: 32px; top: 165px; display: flex; align-items: center; gap: 5px; }
.float-ic svg { width: 13px; height: 14px; }
.vscroll { width: 14px; flex: none; background: #e9ebf2; margin-right: 0; display: flex; flex-direction: column; align-items: center; color: #777; font-size: 7px; }
.vs-up { height: 14px; line-height: 14px; }
.vs-thumb { width: 11px; height: 34px; border-radius: 5px; background: #d3d6db; margin-top: 184px; }
.vs-dn { margin-top: 165px; line-height: 10px; height: 12px; }
.vs-b { height: 16px; line-height: 16px; font-size: 8px; }
.vs-sq { width: 7px; height: 7px; border: 1px solid #777; border-radius: 1px; margin: 3px 0; }
.side { width: 40px; flex: none; display: flex; flex-direction: column; align-items: center; padding-top: 10px; }
.sd { width: 18px; height: 18px; fill: none; stroke: #555; stroke-width: 1; margin-bottom: 15.600px; }
.sd.light { stroke: #9a9da2; }
.sd-rule { width: 36px; height: 1px; background: #e8e9eb; margin-top: 210px; }
.sd-more { width: 16px; height: 5px; fill: none; stroke: #666; margin-top: 22px; }

/* status */
.status { height: 26px; flex: none; display: flex; align-items: center; background: #f7f8fa; padding: 0 0 1px 9px; border-top: 1px solid #eff0f2; }
.s-t { font-size: 11.5px; color: #555; white-space: nowrap; display: flex; align-items: center; }
.s-page { width: 73px; }
.s-count { width: 68px; }
.s-spell { width: 87px; height: 24px; padding-left: 3px; gap: 2px; background: #eef3fa; }
.i-s2 { width: 15px; height: 15px; fill: none; stroke: #555; }
.s-check { width: 81px; gap: 3px; }
.s-compat { width: 61px; }
.tq { font-family: "Liberation Serif", serif; font-size: 14px; margin-right: 3px; }
.s-right { margin-left: auto; display: flex; align-items: center; padding-right: 13px; }
.i-s3 { width: 17px; height: 17px; fill: none; stroke: #555; }
.s-right > .i-s3 { margin-right: 7px; }
.s-right > .s-frame { margin-right: 6px; }
.s-sep { height: 18px; margin: 0 7px 0 3px; }
.s-sep2 { margin: 0 8px 0 3px; }
.s-sel { width: 21px; height: 24px; background: #e3e7ee; display: flex; align-items: center; justify-content: center; margin-right: 6px; border-radius: 2px; }
.s-zoom { width: 38px; }
.s-minus { width: 10px; height: 10px; margin-left: 5px; }
.slider { width: 132px; height: 1px; background: #b9bcc0; margin: 0 8px 0 11px; position: relative; }
.slider i { position: absolute; left: 36px; top: -6px; width: 12px; height: 12px; border-radius: 50%; background: #f4f5f6; border: 1px solid #777; }
.s-plus { width: 10px; height: 10px; }
.s-full { width: 14px; height: 14px; margin-left: 13px; }

/* taskbar */
.taskbar { height: 37px; flex: none; display: flex; align-items: center; background: linear-gradient(#1d2a3d, #25344a 50%, #1d2a3c); color: #e6e9ee; padding-left: 15px; }
.t-win { width: 15px; height: 15px; }
.t-pin { width: 21px; height: 22px; margin-left: 29px; }
.t-search { display: flex; height: 27px; margin-left: 14px; width: 171px; }
.ts-in { width: 128px; background: #eeeeee; display: flex; align-items: center; padding-left: 4px; color: #333; font-size: 9.500px; }
.ts-e { font: 700 20px/20px "Liberation Sans", sans-serif; color: #2e8fe0; width: 14px; }
.ts-c { width: 3px; height: 3px; background: #999; margin: 0 8px 0 2px; }
.ts-q { font-weight: 500; }
.ts-btn { width: 43px; background: #0a84ff; color: #e8f3ff; font-size: 10px; line-height: 27px; text-align: center; white-space: nowrap; }
.t-sep { width: 1px; height: 24px; background: #3b4859; margin-left: 8px; }
.t-apps { display: flex; margin-left: 12px; height: 37px; align-items: stretch; }
.app { display: flex; align-items: center; justify-content: center; border-bottom: 2px solid transparent; }
.app svg { width: 22px; height: 22px; overflow: visible; }
.a-ie { width: 45px; margin-right: 3px; }
.a-green { width: 45px; margin-right: 5px; }
.a-folder { width: 37px; margin-right: 10px; }
.a-fox { width: 38px; margin-right: 5px; }
.a-wps { width: 45px; background: #485566; }
.app.on { border-bottom-color: #6ab0ee; }
.e-blue { font: 700 27px "Liberation Sans", sans-serif; fill: #35a9e8; text-anchor: middle; }
.e-white { font: 700 17px "Liberation Sans", sans-serif; fill: #fff; text-anchor: middle; }
.t-tray { margin-left: auto; display: flex; align-items: center; }
.weather { position: relative; display: flex; align-items: center; gap: 9px; font-size: 13px; color: #c5ccd4; width: 102px; white-space: nowrap; }
.wx { width: 20px; height: 16px; }
.cpu { position: absolute; left: 26px; top: -8px; width: 56px; text-align: center; color: #d9dde2; }
.cpu b { display: block; font-weight: 400; font-size: 12px; line-height: 16px; }
.tray-ics { display: grid; grid-template-columns: repeat(13, 22.500px); justify-items: center; align-items: center; }
.tray-ics svg { width: 16px; height: 16px; }
.zh { font-size: 12px; color: #f1f1f1; }
.t-q { width: 15px; height: 15px; margin-left: 10px; }
.clock { margin-left: 16px; width: 70px; display: flex; flex-direction: column; font-size: 11.5px; line-height: 16px; color: #e3e7ec; white-space: nowrap; }
.notify { position: relative; width: 20px; margin-right: 8px; margin-left: 7px; }
.notify svg { width: 15px; height: 15px; }
.badge { position: absolute; left: 9px; top: 7px; width: 11px; height: 12px; background: #e8191c; color: #fff; font-size: 8px; line-height: 12px; text-align: center; }

/* player */
.player { position: absolute; left: 0; top: 784px; width: 1198px; height: 116px; background: #111; color: #fff; }
.bar { height: 32px; display: flex; align-items: center; padding-left: 16px; }
.time { font: 11.500px "Liberation Sans", sans-serif; width: 61px; color: #eee; }
.track { width: 1044px; height: 4px; background: #8d8d8d; border-radius: 2px; }
.fill { height: 4px; background: #f97c2e; position: relative; border-radius: 2px; }
.thumb { position: absolute; right: -10px; top: -8px; width: 20px; height: 20px; border-radius: 50%; background: #f97c2e; border: 4px solid #4a4a4a; }
.time-end { margin-left: 23px; width: 40px; }
.ctrl { display: flex; align-items: center; height: 60px; margin-top: 12px; }
.title { width: 438px; padding-left: 15px; font-size: 19.500px; line-height: 24px; font-weight: 600; color: #fff; white-space: nowrap; font-family: "Noto Sans", "Noto Sans CJK SC", sans-serif; filter: blur(.3px); }
.pb { width: 44px; height: 44px; padding: 0; border: 0; background: none; display: flex; align-items: center; justify-content: center; }
.pb svg { width: 20px; height: 20px; fill: none; stroke: #eee; stroke-width: 1; }
.pb .fw { fill: #eee; stroke: none; }
.pb .gray { stroke: #777; }
.pb .gray .fw { fill: #777; }
.pb text { font: 400 8.500px "Liberation Sans", sans-serif; fill: #eee; stroke: none; text-anchor: middle; }
.play { width: 58px; height: 50px; padding: 0 4px; border: 0; background: none; }
.play svg { width: 50px; height: 50px; }
.ctrl-right { margin-left: auto; display: flex; }
.mark { position: absolute; right: 15px; top: 87px; font: 17.400px "Liberation Sans", sans-serif; color: #9b9b9b; letter-spacing: .15px; white-space: nowrap; }

/* floating level meters */
.levels { position: absolute; background: #2d3238; }
.lv-l { left: 2px; top: 100px; width: 6px; height: 56px; border-radius: 3px; background: linear-gradient(#1f2f44 0, #26323f 84%, #4f9b62 88%, #4f9b62 100%); }
.lv-r { left: 1189px; top: 205px; width: 9px; height: 56px; border-radius: 3px 0 0 3px; padding: 2px 1px 2px 3px; }
.lv-r i { background: linear-gradient(#333 0, #333 40%, #a7a858 50%, #5aa57a 100%); height: 100%; }
```
